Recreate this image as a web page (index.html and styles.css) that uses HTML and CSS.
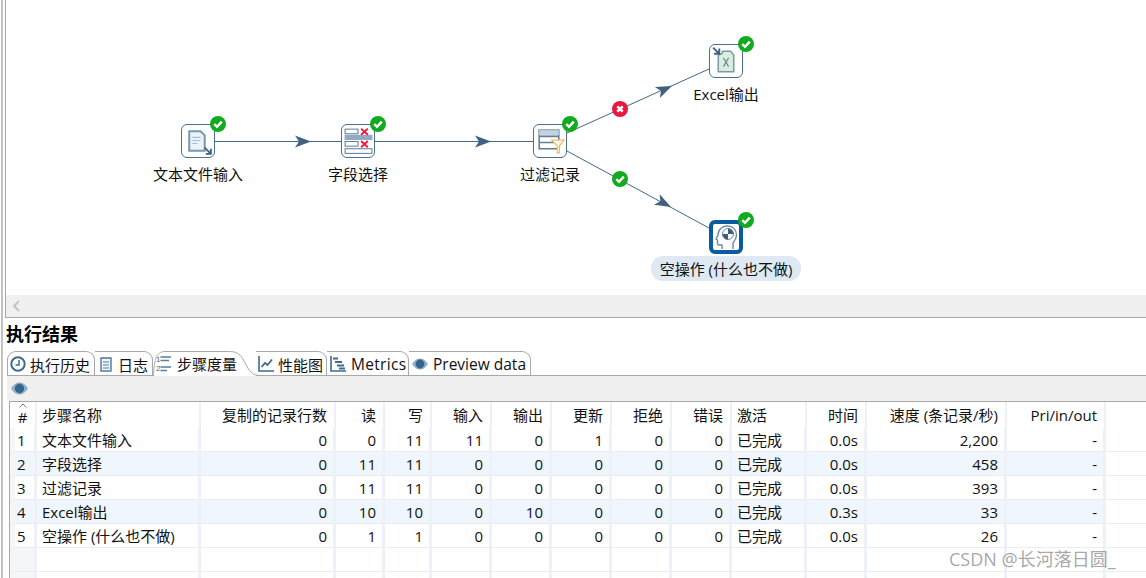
FILE: index.html
```html
<!DOCTYPE html>
<html lang="zh">
<head>
  <meta charset="UTF-8" />
  <title>执行结果</title>
  <link rel="stylesheet" href="styles.css">
</head>
<body>
  <svg class="defs" width="0" height="0">
    <symbol id="ok" viewBox="0 0 16 16">
      <circle cx="8" cy="8" r="8" fill="#12ab1f"/>
      <path d="M4.300 8.200 7 10.800 11.800 5.600" fill="none" stroke="#fff" stroke-width="2.400"/>
    </symbol>
    <symbol id="bad" viewBox="0 0 16 16">
      <circle cx="8" cy="8" r="8" fill="#e8173f"/>
      <path d="M5.300 5.300 10.700 10.700M10.700 5.300 5.300 10.700" fill="none" stroke="#fff" stroke-width="2.600"/>
    </symbol>
    <symbol id="eye" viewBox="0 0 16 16">
      <path d="M0 8C3 3.400 5.500 2.400 8 2.400S13 3.400 16 8C13 12.600 10.500 13.600 8 13.600S3 12.600 0 8Z" fill="#8fb0c9"/>
      <circle cx="8" cy="8" r="4.400" fill="#35658c"/>
    </symbol>
  </svg>

  <div class="page">
    <div class="graph-pane">
      <div class="canvas">
        <svg class="edges" viewBox="6 0 1140 295" width="1140" height="295">
          <g fill="none" stroke="#45688a" stroke-width="1">
            <path d="M215 141.500H341M375 141.500H533"/>
            <path d="M567 133 709 69M567 151 709 228"/>
          </g>
          <g fill="#40627f">
            <path d="M311 141.500 295 135.500 299 141.500 295 147.500Z"/>
            <path d="M491 141.500 475 135.500 479 141.500 475 147.500Z"/>
            <path transform="translate(672 86) rotate(-24)" d="M0 0-16-6-12 0-16 6Z"/>
            <path transform="translate(671 207) rotate(28)" d="M0 0-16-6-12 0-16 6Z"/>
          </g>
          <use href="#bad" x="612" y="101" width="16" height="16"/>
          <use href="#ok" x="612" y="171" width="16" height="16"/>
        </svg>

        <div class="node node-input">
          <div class="node-box">
            <svg viewBox="0 0 31 31">
              <path d="M7 6H18L22 10V25H7Z" fill="#eaf3fa" stroke="#7b97b0" stroke-width="2"/>
              <path d="M10 12H18M10 15H18M10 18H15" stroke="#a9bfd1"/>
              <path d="M22 22 28 28M28 23V28H23" fill="none" stroke="#3f6181" stroke-width="1.800"/>
            </svg>
          </div>
          <svg class="badge"><use href="#ok"/></svg>
          <span class="node-label">文本文件输入</span>
        </div>

        <div class="node node-select">
          <div class="node-box">
            <svg viewBox="0 0 31 31">
              <g fill="none" stroke="#5f7f9b">
                <rect x="3" y="4" width="12.500" height="4.500"/>
                <rect x="3" y="16" width="12.500" height="4.500"/>
                <rect x="3" y="23" width="26" height="4.500"/>
              </g>
              <rect x="2.500" y="9.500" width="27" height="5" fill="#94a9bd"/>
              <path d="M18.500 3.500 25 9.500M25 3.500 18.500 9.500M18.500 15.500 25 21.500M25 15.500 18.500 21.500" stroke="#f0163c" stroke-width="1.800"/>
            </svg>
          </div>
          <svg class="badge"><use href="#ok"/></svg>
          <span class="node-label">字段选择</span>
        </div>

        <div class="node node-filter">
          <div class="node-box">
            <svg viewBox="0 0 31 31">
              <rect x="5" y="5" width="19" height="18" fill="#fff" stroke="#5f7f9b" stroke-width="1.500"/>
              <rect x="5" y="5" width="19" height="5" fill="#c5d3df"/>
              <path d="M5 11H24M5 17H24" stroke="#5f7f9b" stroke-width="1.500"/>
              <path d="M17 14.500H29L24.500 20.500V27H22.500V20.500Z" fill="#fffaf0" stroke="#f8ae45"/>
            </svg>
          </div>
          <svg class="badge"><use href="#ok"/></svg>
          <span class="node-label">过滤记录</span>
        </div>

        <div class="node node-excel">
          <div class="node-box">
            <svg viewBox="0 0 31 31">
              <path d="M8 26V10L12 8V6H20L23 10V26Z" fill="#d9eedb" stroke="#7d99ae" stroke-width="1.500"/>
              <path d="M13 12.500 18 21M18 12.500 13 21" stroke="#6f8da6" stroke-width="1.200"/>
              <path d="M3 2.500 9 8.500M9 3.500V8.500H4" fill="none" stroke="#3f6181" stroke-width="1.800"/>
            </svg>
          </div>
          <svg class="badge"><use href="#ok"/></svg>
          <span class="node-label">Excel输出</span>
        </div>

        <div class="node node-dummy">
          <div class="node-box node-box-selected">
            <svg viewBox="0 0 26 26">
              <path d="M9 25V21H6A1.500 1.500 0 0 1 4.500 19.500V16L3 15 5 11C5 5 10 2 14.500 2 20 2 23.500 6 23.500 11 23.500 15 21 17 20 19V25" fill="#fff" stroke="#6a8aa3" stroke-width="1.400"/>
              <circle cx="15" cy="10" r="5.500" fill="#fff" stroke="#6a8aa3"/>
              <path d="M15 10V4.500A5.500 5.500 0 0 1 20.500 10ZM15 10V15.500A5.500 5.500 0 0 1 9.500 10Z" fill="#3d607e"/>
            </svg>
          </div>
          <svg class="badge"><use href="#ok"/></svg>
          <span class="node-label node-label-selected">空操作 (什么也不做)</span>
        </div>
      </div>
      <div class="hscroll">
        <svg width="10" height="12" viewBox="0 0 10 12"><path d="M8 1 3 6 8 11" fill="none" stroke="#c4c4c4" stroke-width="2"/></svg>
      </div>
    </div>

    <div class="results">
      <h2 class="results-title">执行结果</h2>

      <div class="tabs">
        <div class="tab tab-history">
          <svg width="16" height="16" viewBox="0 0 16 16"><circle cx="8" cy="8" r="6.700" fill="none" stroke="#3f6b8f" stroke-width="2"/><path d="M9 4V9H5.500" fill="none" stroke="#3f6b8f" stroke-width="1.500"/></svg>
          执行历史
        </div>
        <div class="tab tab-log">
          <svg width="16" height="16" viewBox="0 0 16 16"><rect x="3" y="2" width="10" height="13" fill="#eef4f9" stroke="#5a7f9e" stroke-width="1.500"/><path d="M5 1V3M8 1V3M11 1V3M5 6H11M5 9H11M5 12H11" stroke="#5a7f9e"/></svg>
          日志
        </div>
        <div class="tab-active">
          <svg class="tab-shape" width="106" height="25" viewBox="0 0 106 25"><path d="M0.500 25C1 10 3 0.500 12 0.500H75C83 0.500 86 2 90 8 95 17 97 24 106 24.500" fill="none" stroke="#a8a8a8"/></svg>
          <svg width="16" height="18" viewBox="0 0 16 18"><text x="0" y="6.500" class="tab-digit">1</text><text x="0" y="16" class="tab-digit">2</text><path d="M4.500 2H15M4.500 5.500H13M4.500 12H15M4.500 15.500H11" stroke="#5a7f9e" stroke-width="1.300"/></svg>
          步骤度量
        </div>
        <div class="tab tab-chart">
          <svg width="16" height="16" viewBox="0 0 16 16"><path d="M1 0V15H16" fill="none" stroke="#3f6b8f" stroke-width="1.600"/><path d="M3.500 11 7 7 9.500 9 14 3.500" fill="none" stroke="#3f6b8f" stroke-width="1.800"/></svg>
          性能图
        </div>
        <div class="tab tab-steps">
          <svg width="16" height="16" viewBox="0 0 16 16"><path d="M1 0V15H16" fill="none" stroke="#3f6b8f" stroke-width="1.600"/><path d="M3 2.500H8M5 6H12M7 9.500H14M9 12.500H15" stroke="#3f6b8f" stroke-width="2"/></svg>
          Metrics
        </div>
        <div class="tab tab-preview">
          <svg width="16" height="16"><use href="#eye"/></svg>
          Preview data
        </div>
      </div>

      <div class="toolbar">
        <svg width="17" height="17"><use href="#eye"/></svg>
      </div>

      <div class="table-wrap">
        <table class="metrics">
          <colgroup>
            <col class="c-num"><col class="c-name"><col class="c-copies"><col class="c-read"><col class="c-write">
            <col class="c-std"><col class="c-std"><col class="c-std"><col class="c-std"><col class="c-std">
            <col class="c-active"><col class="c-std"><col class="c-speed"><col class="c-pri"><col>
          </colgroup>
          <thead>
            <tr>
              <th class="num">
                <svg class="sort" width="8" height="5" viewBox="0 0 8 5"><path d="M0.500 4.500 4 1 7.500 4.500" fill="none" stroke="#777"/></svg>
                #
              </th>
              <th class="left">步骤名称</th>
              <th>复制的记录行数</th><th>读</th><th>写</th><th>输入</th><th>输出</th><th>更新</th><th>拒绝</th><th>错误</th>
              <th class="left">激活</th><th>时间</th><th>速度 (条记录/秒)</th><th>Pri/in/out</th><th class="rest"></th>
            </tr>
          </thead>
          <tbody>
            <tr>
              <td class="num">1</td><td class="left">文本文件输入</td>
              <td>0</td><td>0</td><td>11</td><td>11</td><td>0</td><td>1</td><td>0</td><td>0</td>
              <td class="left">已完成</td><td>0.0s</td><td>2,200</td><td>-</td><td class="rest"></td>
            </tr>
            <tr>
              <td class="num">2</td><td class="left">字段选择</td>
              <td>0</td><td>11</td><td>11</td><td>0</td><td>0</td><td>0</td><td>0</td><td>0</td>
              <td class="left">已完成</td><td>0.0s</td><td>458</td><td>-</td><td class="rest"></td>
            </tr>
            <tr>
              <td class="num">3</td><td class="left">过滤记录</td>
              <td>0</td><td>11</td><td>11</td><td>0</td><td>0</td><td>0</td><td>0</td><td>0</td>
              <td class="left">已完成</td><td>0.0s</td><td>393</td><td>-</td><td class="rest"></td>
            </tr>
            <tr>
              <td class="num">4</td><td class="left">Excel输出</td>
              <td>0</td><td>10</td><td>10</td><td>0</td><td>10</td><td>0</td><td>0</td><td>0</td>
              <td class="left">已完成</td><td>0.3s</td><td>33</td><td>-</td><td class="rest"></td>
            </tr>
            <tr>
              <td class="num">5</td><td class="left">空操作 (什么也不做)</td>
              <td>0</td><td>1</td><td>1</td><td>0</td><td>0</td><td>0</td><td>0</td><td>0</td>
              <td class="left">已完成</td><td>0.0s</td><td>26</td><td>-</td><td class="rest"></td>
            </tr>
            <tr class="blank">
              <td class="num"></td><td></td><td></td><td></td><td></td><td></td><td></td><td></td><td></td><td></td><td></td><td></td><td></td><td></td><td class="rest"></td>
            </tr>
            <tr class="blank">
              <td class="num"></td><td></td><td></td><td></td><td></td><td></td><td></td><td></td><td></td><td></td><td></td><td></td><td></td><td></td><td class="rest"></td>
            </tr>
          </tbody>
        </table>
      </div>
    </div>
  </div>

  <div class="watermark">CSDN @长河落日圆_</div>
</body>
</html>
```

FILE: styles.css
```css
*{margin:0;padding:0;box-sizing:border-box;}
html,body{height:100%;overflow:hidden;}
body{background:#fff;color:#111;font-family:"Open Sans","Noto Sans CJK SC",sans-serif;font-size:15px;position:relative;}
.defs{position:absolute;}

.page{margin-left:1px;border-left:2px solid #c2c2c2;height:578px;overflow:hidden;}

/* graph area */
.graph-pane{margin-left:2px;border-left:1px solid #a8a8a8;border-bottom:1px solid #a8a8a8;height:318px;}
.canvas{position:relative;height:295px;}
.edges{position:absolute;left:0;top:0;}
.hscroll{height:22px;background:#f0f0f0;display:flex;align-items:center;padding-left:5px;}

.node{position:absolute;width:34px;display:flex;flex-direction:column;align-items:center;}
.node-input{left:175px;top:124px;}
.node-select{left:335px;top:124px;}
.node-filter{left:527px;top:124px;}
.node-excel{left:703px;top:44px;}
.node-dummy{left:703px;top:220px;}
.node-box{width:34px;height:34px;flex:none;background:#fff;border:1.5px solid #4c6f8d;border-radius:6px;}
.node-box svg{display:block;width:100%;height:100%;}
.node-box-selected{border:4px solid #0a5a9f;}
.badge{position:absolute;left:29px;top:-8px;width:16px;height:16px;}
.node-label{margin-top:6px;line-height:20px;white-space:nowrap;flex:none;}
.node-label-selected{margin-top:2px;width:150px;height:25px;line-height:27px;text-align:center;background:#dfe9f4;border-radius:12px;}

/* results */
.results{padding-left:3px;}
.results-title{font-size:18px;font-weight:700;line-height:33px;height:33px;color:#000;}
.tabs{display:flex;height:25px;margin-left:1px;border-bottom:1px solid #a8a8a8;}
.tab{display:flex;align-items:center;gap:4px;height:25px;padding-left:2px;border:1px solid #a8a8a8;border-left:0;border-bottom:0;border-radius:0 9px 0 0;white-space:nowrap;flex:none;}
.tab-history{width:88px;border-left:1px solid #a8a8a8;border-radius:9px 9px 0 0;}
.tab-log{width:58px;padding-left:3px;}
.tab-active{position:relative;width:103px;height:25px;flex:none;display:flex;align-items:center;gap:5px;padding-left:3px;background:#fff;white-space:nowrap;z-index:1;}
.tab-shape{position:absolute;left:0;top:0;}
.tab-digit{font-size:8px;fill:#3f6b8f;font-family:"Liberation Sans",sans-serif;}
.tab-chart{width:71px;}
.tab-steps{width:82px;padding-left:3px;gap:5px;font-size:15.5px;letter-spacing:.3px;}
.tab-preview{width:122px;padding-left:3px;gap:5px;font-size:15.5px;}

.toolbar{height:25px;margin-left:1px;background:#f0f0f0;display:flex;align-items:center;padding-left:4px;}

.table-wrap{margin-left:3px;border-left:1px solid #a8a8a8;border-top:1px solid #a8a8a8;}
.metrics{width:1136px;table-layout:fixed;border-collapse:separate;border-spacing:0;font-size:15px;line-height:20px;}
.c-num{width:27px;}
.c-name{width:164px;}
.c-copies{width:135px;}
.c-read{width:49px;}
.c-write{width:47px;}
.c-std{width:60px;}
.c-active{width:75px;}
.c-speed{width:140px;}
.c-pri{width:99px;}
.metrics th{height:26px;font-weight:400;text-align:right;padding:0 7px 0 0;border-right:2px solid #eef0f5;white-space:nowrap;position:relative;}
.metrics td{height:24px;text-align:right;padding:0 6px 0 0;border-right:3px solid #eef1f7;border-bottom:1px solid #eaecf1;white-space:nowrap;}
.metrics .left{text-align:left;padding:0 0 0 5px;}
.metrics .num{text-align:left;padding:0 0 0 2px;border-left:5px solid #f5f6f8;}
.metrics th.num{border-left:0;text-align:center;padding:3px 0 0;}
.metrics .rest{border-right:0;}
.metrics tbody tr:nth-child(even) td{background:#eff6fd;}
.metrics tbody tr:nth-child(even) .rest,.metrics tbody tr.blank td{background:#fff;}
.metrics tbody tr.blank .num{background:#f5f6f8;}
.sort{position:absolute;left:9px;top:1px;}

.watermark{position:absolute;left:949px;top:546px;font-size:18px;line-height:26px;color:rgba(110,110,110,.62);white-space:nowrap;}
```
